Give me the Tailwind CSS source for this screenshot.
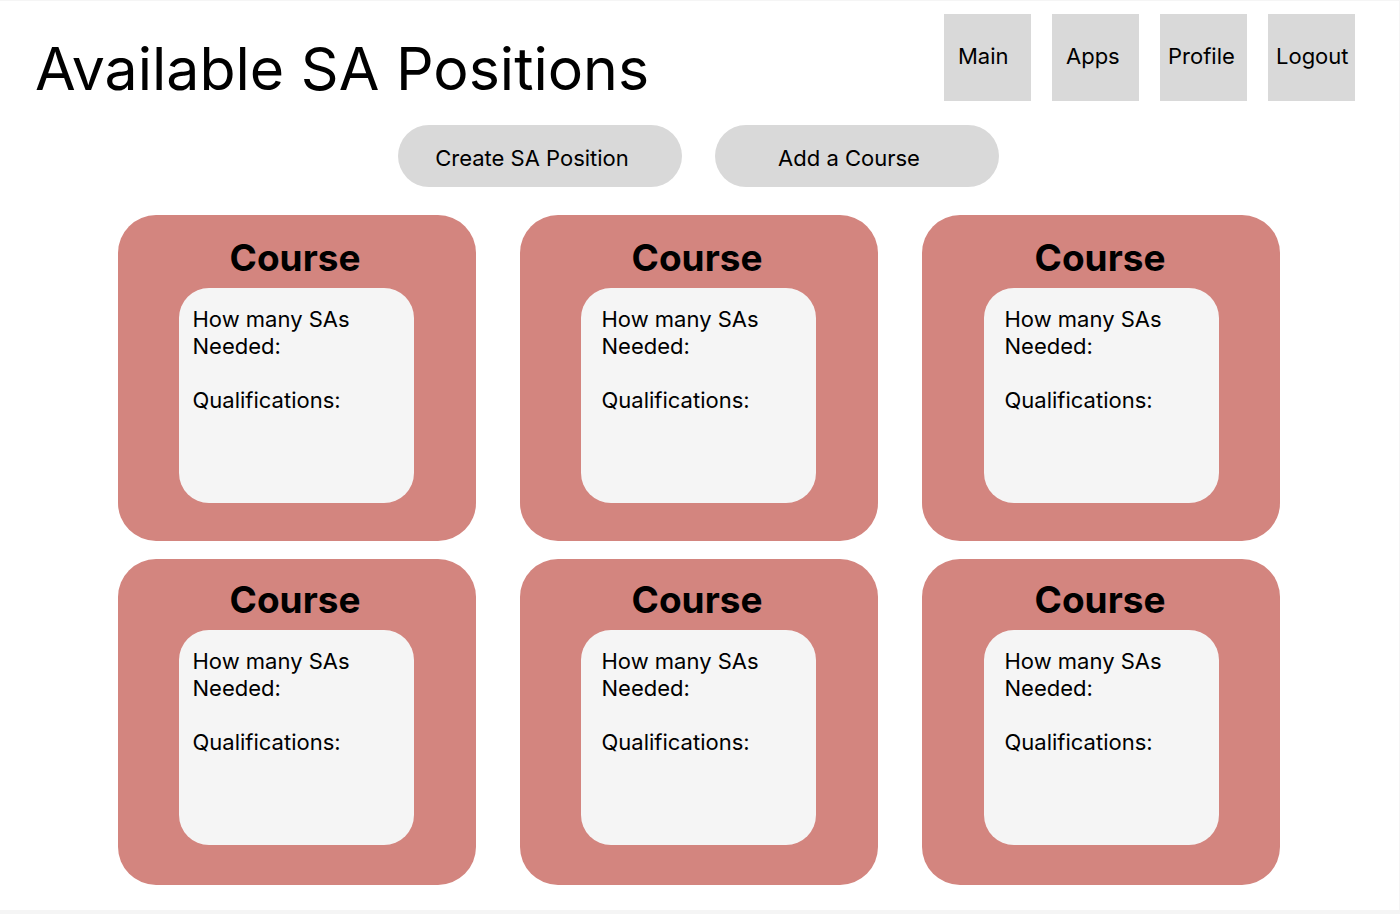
<!DOCTYPE html>
<html lang="en">
<head>
<meta charset="utf-8">
<title>Available SA Positions</title>
<script src="https://cdn.jsdelivr.net/npm/@tailwindcss/browser@4"></script>
</head>
<body class="min-h-screen border-t border-r border-b-4 border-[#f5f5f5] bg-white font-['Inter',sans-serif] text-black">
<header class="flex items-start justify-between pt-[13px] pl-[35px] pr-11">
  <h1 class="pt-5 text-[59px] leading-[70px] font-normal whitespace-nowrap">Available SA Positions</h1>
  <nav class="flex gap-[21px] text-[22px] leading-[27px]">
    <a href="#" class="flex size-[87px] items-center bg-[#d9d9d9] pb-[2px] pl-[14px]">Main</a>
    <a href="#" class="flex size-[87px] items-center bg-[#d9d9d9] pb-[2px] pl-[14px]">Apps</a>
    <a href="#" class="flex size-[87px] items-center bg-[#d9d9d9] pb-[2px] pl-2">Profile</a>
    <a href="#" class="flex size-[87px] items-center bg-[#d9d9d9] pb-[2px] pl-2">Logout</a>
  </nav>
</header>
<main>
  <div class="mt-[21px] flex justify-center gap-[33px] pr-[2px] text-[22px] leading-[27px]">
    <button type="button" class="h-[62px] w-[284px] rounded-full bg-[#d9d9d9] pt-1 pr-4">Create SA Position</button>
    <button type="button" class="h-[62px] w-[284px] rounded-full bg-[#d9d9d9] pt-1 pr-4">Add a Course</button>
  </div>
  <div class="mt-7 grid grid-cols-3 gap-x-11 gap-y-[18px] pr-[119px] pl-[118px] text-[22px] leading-[27px]">
    <section class="h-[326px] rounded-[38px] bg-[#d3857f] pt-5 pr-[2px]">
      <h2 class="pr-[2px] text-center text-[37px] leading-[46px] font-bold">Course</h2>
      <div class="mx-auto mt-[7px] h-[215px] w-[235px] rounded-[30px] bg-[#f5f5f5] pt-[18px] pl-[14px]"><p>How many SAs<br>Needed:</p><p class="mt-[27px]">Qualifications:</p></div>
    </section>
    <section class="h-[326px] rounded-[38px] bg-[#d3857f] pt-5 pr-[2px]">
      <h2 class="pr-[2px] text-center text-[37px] leading-[46px] font-bold">Course</h2>
      <div class="mx-auto mt-[7px] h-[215px] w-[235px] rounded-[30px] bg-[#f5f5f5] pt-[18px] pl-[21px]"><p>How many SAs<br>Needed:</p><p class="mt-[27px]">Qualifications:</p></div>
    </section>
    <section class="h-[326px] rounded-[38px] bg-[#d3857f] pt-5">
      <h2 class="pr-[2px] text-center text-[37px] leading-[46px] font-bold">Course</h2>
      <div class="mx-auto mt-[7px] h-[215px] w-[235px] rounded-[30px] bg-[#f5f5f5] pt-[18px] pl-[21px]"><p>How many SAs<br>Needed:</p><p class="mt-[27px]">Qualifications:</p></div>
    </section>
    <section class="h-[326px] rounded-[38px] bg-[#d3857f] pt-[18px] pr-[2px]">
      <h2 class="pr-[2px] text-center text-[37px] leading-[46px] font-bold">Course</h2>
      <div class="mx-auto mt-[7px] h-[215px] w-[235px] rounded-[30px] bg-[#f5f5f5] pt-[18px] pl-[14px]"><p>How many SAs<br>Needed:</p><p class="mt-[27px]">Qualifications:</p></div>
    </section>
    <section class="h-[326px] rounded-[38px] bg-[#d3857f] pt-[18px] pr-[2px]">
      <h2 class="pr-[2px] text-center text-[37px] leading-[46px] font-bold">Course</h2>
      <div class="mx-auto mt-[7px] h-[215px] w-[235px] rounded-[30px] bg-[#f5f5f5] pt-[18px] pl-[21px]"><p>How many SAs<br>Needed:</p><p class="mt-[27px]">Qualifications:</p></div>
    </section>
    <section class="h-[326px] rounded-[38px] bg-[#d3857f] pt-[18px]">
      <h2 class="pr-[2px] text-center text-[37px] leading-[46px] font-bold">Course</h2>
      <div class="mx-auto mt-[7px] h-[215px] w-[235px] rounded-[30px] bg-[#f5f5f5] pt-[18px] pl-[21px]"><p>How many SAs<br>Needed:</p><p class="mt-[27px]">Qualifications:</p></div>
    </section>
  </div>
</main>
</body>
</html>
